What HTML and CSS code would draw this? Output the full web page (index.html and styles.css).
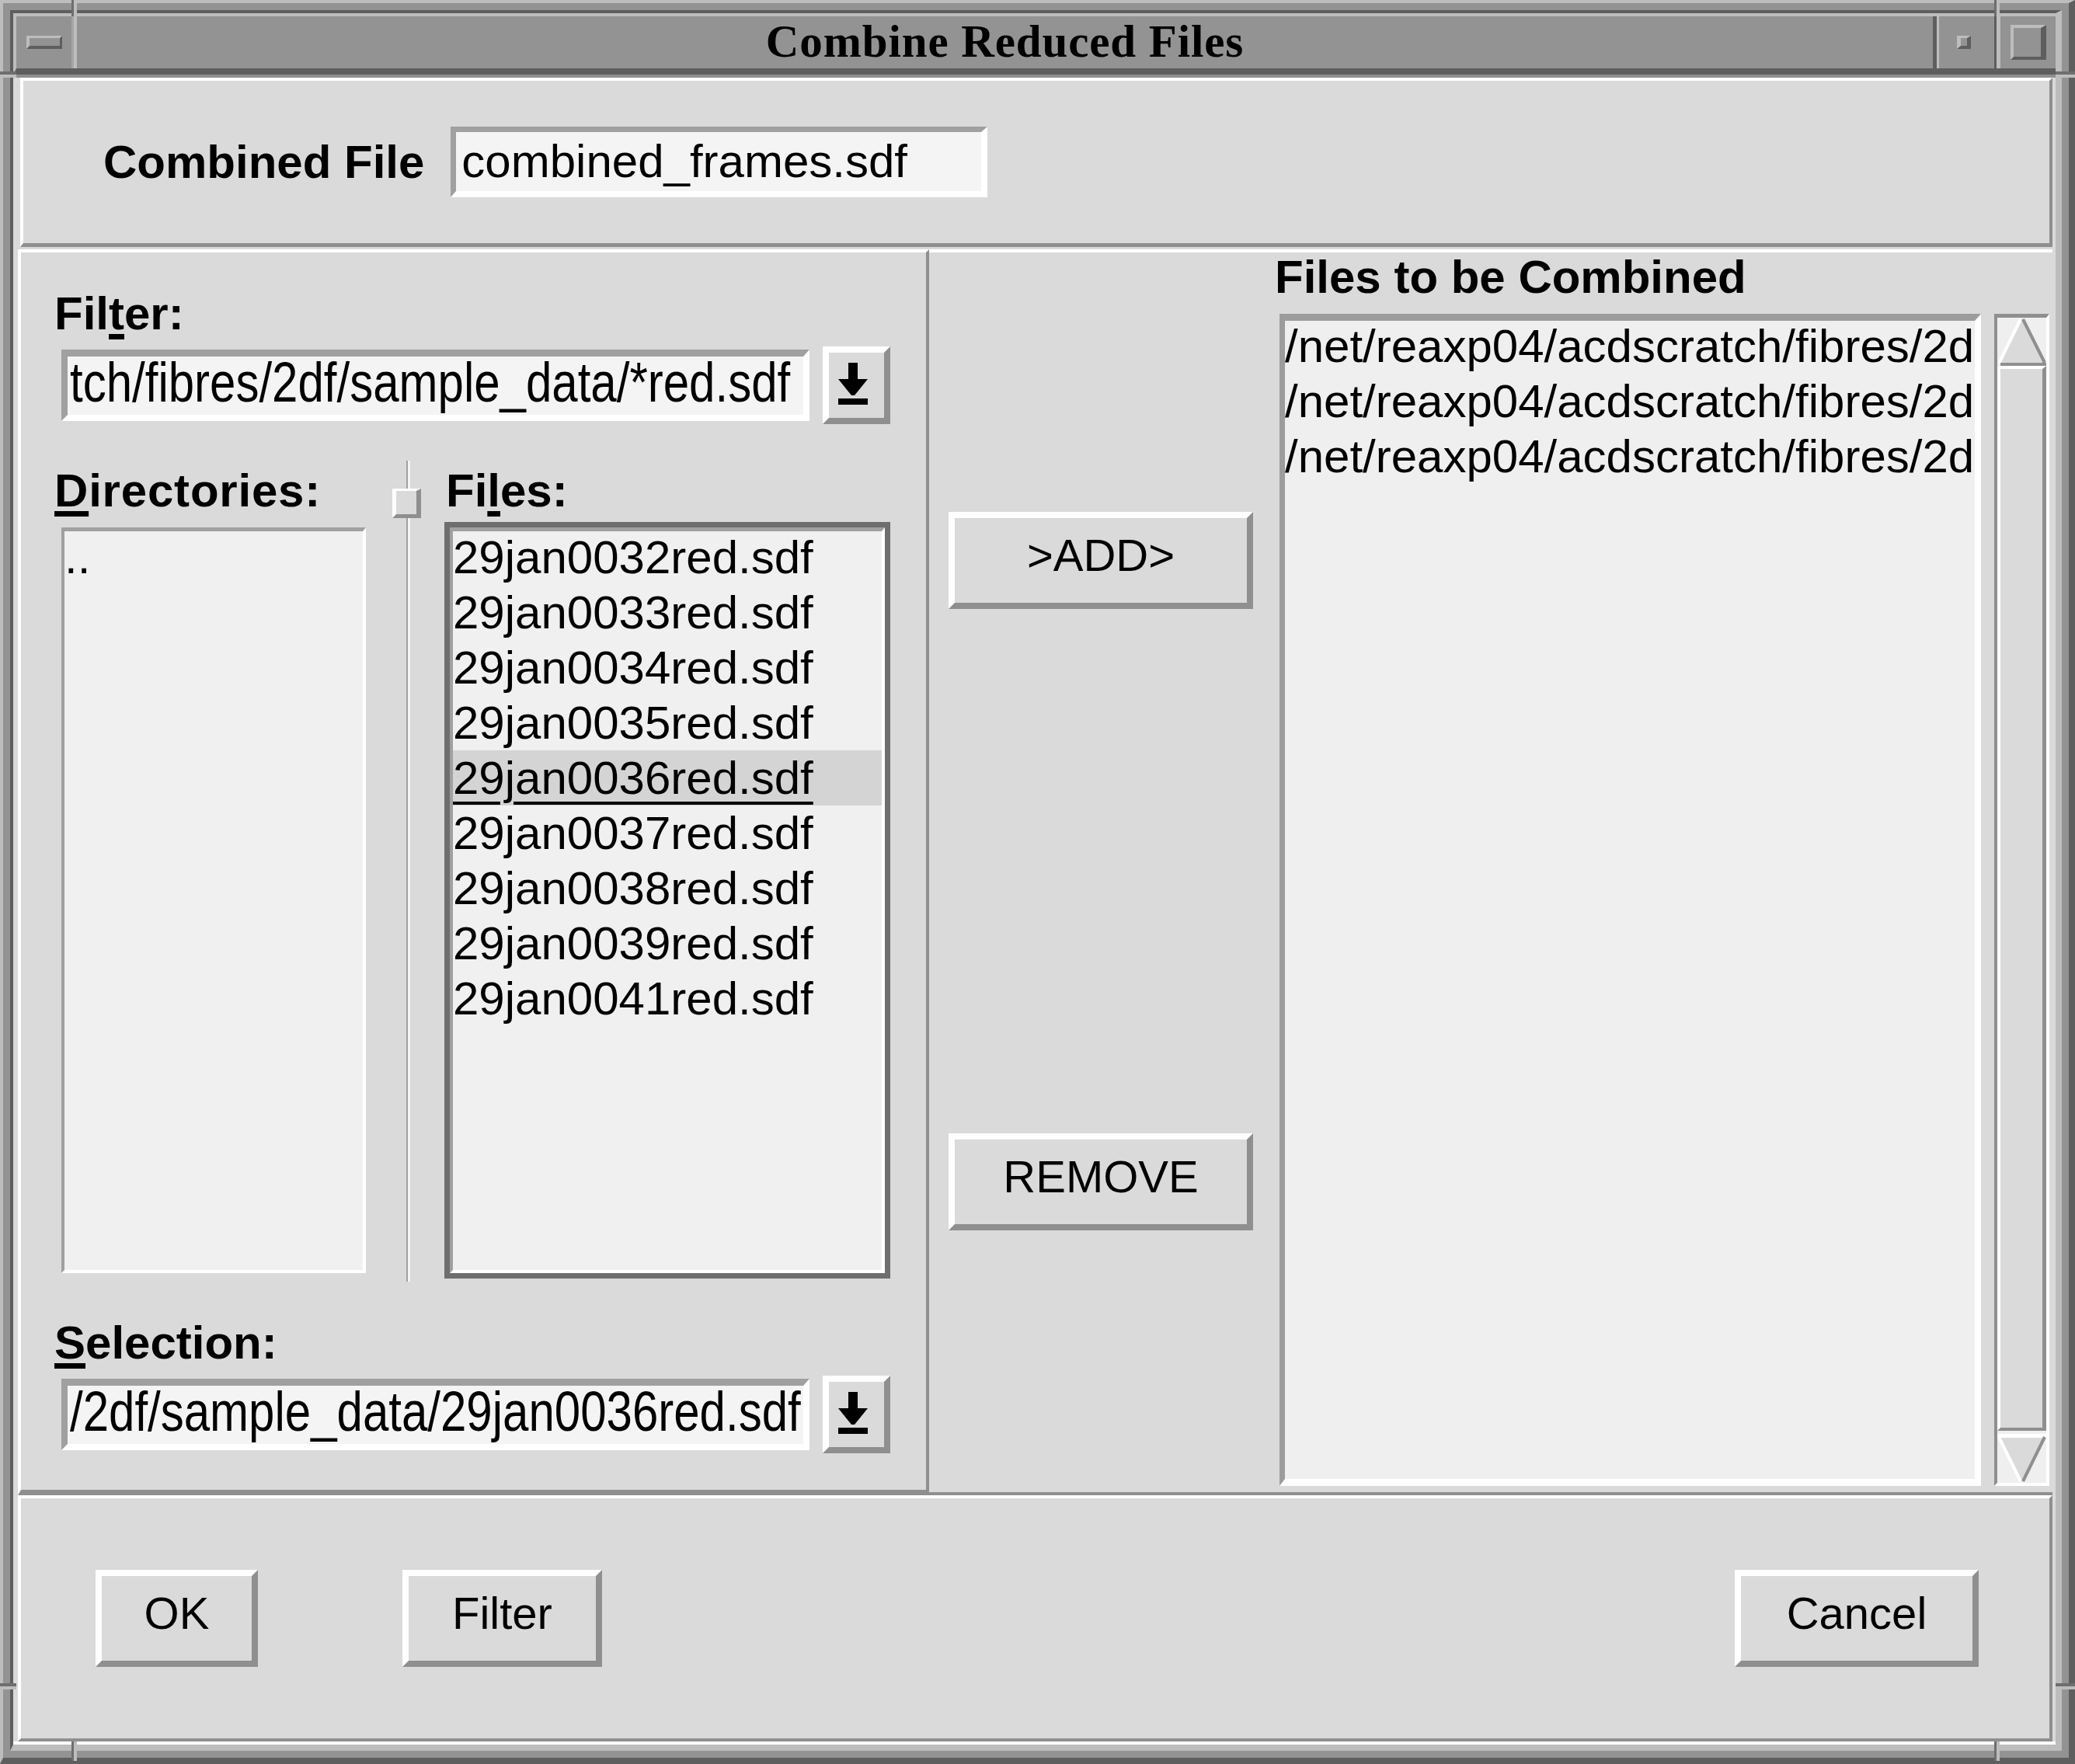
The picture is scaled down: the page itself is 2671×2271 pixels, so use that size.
FILE: index.html
```html
<!DOCTYPE html>
<html>
<head>
<meta charset="utf-8">
<title>Combine Reduced Files</title>
<link rel="stylesheet" href="styles.css">
</head>
<body>
<div class="window">
  <span class="mark mark-v mark-tl"></span>
  <span class="mark mark-v mark-tr"></span>
  <span class="mark mark-v mark-bl"></span>
  <span class="mark mark-v mark-br"></span>
  <span class="mark mark-h mark-lt"></span>
  <span class="mark mark-h mark-rt"></span>
  <span class="mark mark-h mark-lb"></span>
  <span class="mark mark-h mark-rb"></span>
  <div class="frame">
    <div class="titlebar">
      <div class="tb-menu"><span class="ico-menu"></span></div>
      <div class="tb-title">Combine Reduced Files</div>
      <div class="tb-min"><span class="ico-min"></span></div>
      <div class="tb-max"><span class="ico-max"></span></div>
    </div>
    <div class="content">
      <div class="sec-top">
        <span class="lbl lbl-combined">Combined File</span>
        <div class="field field-combined"><span class="field-text">combined_frames.sdf</span></div>
      </div>
      <div class="middle">
        <div class="panel-left">
          <div class="lbl lbl-filter">Fil<u>t</u>er:</div>
          <div class="field-row">
            <div class="field field-path"><span class="field-text tall">tch/fibres/2df/sample_data/*red.sdf</span></div>
            <div class="arrow-btn">
              <svg width="71" height="84" viewBox="0 0 71 84"><rect x="25" y="13" width="12" height="22" fill="#000"/><polygon points="12,34 50,34 33,55 29,55" fill="#000"/><rect x="12" y="59" width="38" height="8" fill="#000"/></svg>
            </div>
          </div>
          <div class="lists">
            <div class="list-col col-dirs">
              <div class="lbl lbl-dirs"><u>D</u>irectories:</div>
              <div class="list">
                <div class="list-inner">
                  <div class="rows"><div class="row">..</div></div>
                </div>
              </div>
            </div>
            <div class="sash"><span class="sash-line"></span><span class="sash-handle"></span></div>
            <div class="list-col col-files">
              <div class="lbl lbl-files">Fi<u>l</u>es:</div>
              <div class="list focus">
                <div class="list-inner">
                  <div class="rows">
                    <div class="row">29jan0032red.sdf</div>
                    <div class="row">29jan0033red.sdf</div>
                    <div class="row">29jan0034red.sdf</div>
                    <div class="row">29jan0035red.sdf</div>
                    <div class="row selected"><span class="cursor">29jan0036red.sdf</span></div>
                    <div class="row">29jan0037red.sdf</div>
                    <div class="row">29jan0038red.sdf</div>
                    <div class="row">29jan0039red.sdf</div>
                    <div class="row">29jan0041red.sdf</div>
                  </div>
                </div>
              </div>
            </div>
          </div>
          <div class="lbl lbl-sel"><u>S</u>election:</div>
          <div class="field-row">
            <div class="field field-path"><span class="field-text tall">/2df/sample_data/29jan0036red.sdf</span></div>
            <div class="arrow-btn">
              <svg width="71" height="84" viewBox="0 0 71 84"><rect x="25" y="13" width="12" height="22" fill="#000"/><polygon points="12,34 50,34 33,55 29,55" fill="#000"/><rect x="12" y="59" width="38" height="8" fill="#000"/></svg>
            </div>
          </div>
        </div>
        <div class="panel-right">
          <div class="btn-col">
            <div class="btn btn-add">&gt;ADD&gt;</div>
            <div class="btn btn-remove">REMOVE</div>
          </div>
          <div class="combo-col">
            <div class="lbl lbl-combo">Files to be Combined</div>
            <div class="combo-row">
              <div class="list-combo">
                <div class="rows">
                  <div class="row">/net/reaxp04/acdscratch/fibres/2d</div>
                  <div class="row">/net/reaxp04/acdscratch/fibres/2d</div>
                  <div class="row">/net/reaxp04/acdscratch/fibres/2d</div>
                </div>
              </div>
              <div class="scrollbar">
                <svg class="sb-arrow" width="63" height="62" viewBox="0 0 63 62"><polygon points="31.5,1 1,58 62,58" fill="#dadada"/><line x1="2" y1="59" x2="30" y2="2" stroke="#fff" stroke-width="4"/><line x1="33" y1="2" x2="61" y2="58" stroke="#8f8f8f" stroke-width="4"/><rect x="4" y="58" width="59" height="4" fill="#8f8f8f"/></svg>
                <div class="sb-slider"></div>
                <svg class="sb-arrow" width="63" height="63" viewBox="0 0 63 63"><polygon points="1,4 62,4 31.5,62" fill="#dadada"/><rect x="0" y="0" width="63" height="5" fill="#fff"/><line x1="2" y1="4" x2="30" y2="61" stroke="#fff" stroke-width="4"/><line x1="61" y1="4" x2="33" y2="61" stroke="#8f8f8f" stroke-width="4"/></svg>
              </div>
            </div>
          </div>
        </div>
      </div>
      <div class="sec-bottom">
        <div class="btn btn-ok">OK</div>
        <div class="btn btn-filter">Filter</div>
        <div class="btn btn-cancel">Cancel</div>
      </div>
    </div>
  </div>
</div>
</body>
</html>
```

FILE: styles.css
```css
html, body {
  margin: 0;
  padding: 0;
  background: #dadada;
}

.window {
  position: relative;
  width: 2671px;
  height: 2271px;
  box-sizing: border-box;
  border-style: solid;
  border-width: 4px 8px 8px 4px;
  border-color: #bdbdbd #5e5e5e #5e5e5e #bdbdbd;
  background: #939393;
  padding: 9px;
}

/* resize-corner marks in the window frame */
.mark {
  position: absolute;
  box-sizing: border-box;
  background: #bdbdbd;
}

.mark-v {
  width: 7px;
  height: 21px;
  border-left: 3px solid #6e6e6e;
}

.mark-h {
  width: 21px;
  height: 8px;
  border-top: 4px solid #6e6e6e;
}

.mark-tl { left: 88px; top: -4px; }
.mark-tr { left: 2563px; top: -4px; }
.mark-bl { left: 88px; top: 2238px; height: 25px; }
.mark-br { left: 2563px; top: 2238px; height: 25px; }
.mark-lt { left: -4px; top: 88px; }
.mark-rt { left: 2642px; top: 88px; width: 25px; }
.mark-lb { left: -4px; top: 2163px; }
.mark-rb { left: 2642px; top: 2163px; width: 25px; }

.frame {
  height: 100%;
  box-sizing: border-box;
  border-style: solid;
  border-width: 4px 8px 8px 4px;
  border-color: #5e5e5e #bdbdbd #bdbdbd #5e5e5e;
  display: flex;
  flex-direction: column;
}

/* ---------- title bar ---------- */
.titlebar {
  display: flex;
  height: 79px;
  box-sizing: border-box;
  border-top: 4px solid #bdbdbd;
  border-left: 4px solid #bdbdbd;
  border-bottom: 8px solid #5e5e5e;
  background: #939393;
}

.tb-menu {
  width: 71px;
  border-right: 3px solid #a6a6a6;
  display: flex;
  align-items: center;
  justify-content: center;
}

.ico-menu {
  width: 46px;
  height: 17px;
  box-sizing: border-box;
  border-style: solid;
  border-width: 3px 3px 4px 4px;
  border-color: #bdbdbd #5e5e5e #5e5e5e #bdbdbd;
}

.tb-title {
  flex: 1;
  border-left: 4px solid #bdbdbd;
  text-align: center;
  font-family: "Liberation Serif", "Times New Roman", serif;
  font-weight: bold;
  font-size: 59px;
  letter-spacing: 0.9px;
  line-height: 65px;
  color: #000;
  white-space: nowrap;
}

.tb-min, .tb-max {
  width: 79px;
  box-sizing: border-box;
  display: flex;
  align-items: center;
  justify-content: center;
}

.tb-min {
  border-left: 5px solid #5e5e5e;
  box-shadow: inset 3px 0 0 #bdbdbd;
  padding-right: 4px;
}

.tb-max {
  border-left: 3px solid #5e5e5e;
  box-shadow: inset 5px 0 0 #bdbdbd;
  padding-left: 5px;
}

.ico-min {
  width: 18px;
  height: 17px;
  box-sizing: border-box;
  border-style: solid;
  border-width: 3px 5px 4px 5px;
  border-color: #bdbdbd #5e5e5e #5e5e5e #bdbdbd;
}

.ico-max {
  width: 46px;
  height: 45px;
  box-sizing: border-box;
  border-style: solid;
  border-width: 4px 7px 4px 4px;
  border-color: #bdbdbd #5e5e5e #5e5e5e #bdbdbd;
}

/* ---------- dialog content ---------- */
.content {
  flex: 1;
  background: #dadada;
  border-top: 4px solid #8f8f8f;
  border-bottom: 4px solid #ffffff;
  padding: 0 4px 0 6px;
  display: flex;
  flex-direction: column;
  font-family: "Liberation Sans", Arial, sans-serif;
  color: #000;
}

.lbl {
  font-family: "Liberation Sans", Arial, sans-serif;
  font-weight: bold;
  font-size: 60px;
  line-height: 70px;
  white-space: nowrap;
}

.lbl u {
  text-decoration-thickness: 7px;
  text-underline-offset: 6px;
}

.sec-top {
  height: 218px;
  box-sizing: border-box;
  margin-left: 3px;
  border-style: solid;
  border-width: 4px 4px 5px 4px;
  border-color: #ffffff #8f8f8f #8f8f8f #ffffff;
  display: flex;
  align-items: center;
  padding-left: 103px;
}

.field {
  box-sizing: border-box;
  border-style: solid;
  border-color: #a0a0a0 #ffffff #ffffff #a0a0a0;
  background: #f4f4f4;
  overflow: hidden;
  white-space: nowrap;
}

.field-combined {
  margin-left: 34px;
  width: 691px;
  height: 91px;
  border-width: 7px 8px 8px 7px;
  padding-left: 7px;
  font-size: 60px;
  line-height: 76px;
}

.field-path {
  width: 963px;
  height: 92px;
  border-width: 9px 8px 8px 8px;
  padding-left: 3px;
}

.field-text.tall {
  font-family: "Liberation Sans", Arial, sans-serif;
  font-size: 60px;
  line-height: 55px;
  display: inline-block;
  transform-origin: 0 0;
  transform: scaleY(1.2);
}

/* ---------- middle ---------- */
.middle {
  display: flex;
  height: 1604px;
  margin-top: 3px;
}

.panel-left {
  width: 1173px;
  box-sizing: border-box;
  border-style: solid;
  border-width: 4px 4px 7px 4px;
  border-color: #ffffff #8f8f8f #8f8f8f #ffffff;
  padding-left: 52px;
  display: flex;
  flex-direction: column;
}

.lbl-filter {
  margin-top: 44px;
  margin-left: -9px;
}

.field-row {
  display: flex;
  align-items: center;
  margin-top: 7px;
  height: 100px;
}

.arrow-btn {
  margin-left: 17px;
  width: 87px;
  height: 100px;
  box-sizing: border-box;
  border: 8px solid;
  border-color: #ffffff #8f8f8f #8f8f8f #ffffff;
  background: #dadada;
}

.arrow-btn svg {
  display: block;
}

.lists {
  display: flex;
  margin-top: 51px;
  margin-left: -7px;
}

.list-col {
  display: flex;
  flex-direction: column;
}

.col-dirs {
  width: 406px;
}

.col-files {
  width: 574px;
}

.lbl-dirs {
  margin-left: -2px;
  letter-spacing: 0.8px;
}

.lbl-files {
  margin-left: 2px;
}

.list {
  margin-top: 5px;
  height: 974px;
  box-sizing: border-box;
  border: 7px solid transparent;
}

.list.focus {
  border-color: #6e6e6e;
}

.list-inner {
  height: 100%;
  box-sizing: border-box;
  border-style: solid;
  border-width: 5px 4px 4px 4px;
  border-color: #a0a0a0 #ffffff #ffffff #a0a0a0;
  background: #f0f0f0;
  overflow: hidden;
}

.rows {
  margin-top: -2px;
}

.row {
  font-family: "Liberation Sans", Arial, sans-serif;
  font-size: 60px;
  line-height: 71px;
  height: 71px;
  white-space: nowrap;
}

.row.selected {
  background: #d4d4d4;
}

.cursor {
  text-decoration: underline;
  text-decoration-thickness: 4px;
  text-underline-offset: 10px;
}

.sash {
  width: 94px;
  position: relative;
  display: flex;
  justify-content: center;
  margin: -4px 0 -4px 0;
}

.sash-line {
  width: 5px;
  box-sizing: border-box;
  border-left: 2px solid #a0a0a0;
  border-right: 3px solid #f4f4f4;
}

.sash-handle {
  position: absolute;
  left: 27px;
  top: 36px;
  width: 37px;
  height: 38px;
  box-sizing: border-box;
  border-style: solid;
  border-width: 3px 6px 5px 5px;
  border-color: #ffffff #8f8f8f #8f8f8f #ffffff;
  background: #dadada;
}

.lbl-sel {
  margin-top: 48px;
  margin-left: -9px;
}

/* ---------- right panel ---------- */
.panel-right {
  flex: 1;
  box-sizing: border-box;
  border-top: 4px solid #ffffff;
  border-bottom: 4px solid #8f8f8f;
  display: flex;
}

.btn {
  box-sizing: border-box;
  border: 8px solid;
  border-color: #ffffff #8f8f8f #8f8f8f #ffffff;
  background: #dadada;
  display: flex;
  align-items: center;
  justify-content: center;
  font-family: "Liberation Sans", Arial, sans-serif;
  font-size: 58px;
  line-height: 70px;
  height: 125px;
  padding-bottom: 13px;
  white-space: nowrap;
}

.btn-col {
  width: 392px;
  margin-left: 25px;
  display: flex;
  flex-direction: column;
}

.btn-add {
  margin-top: 334px;
}

.btn-remove {
  margin-top: 675px;
}

.combo-col {
  margin-left: 34px;
  display: flex;
  flex-direction: column;
}

.lbl-combo {
  margin-top: 2px;
  margin-left: -6px;
  line-height: 60px;
}

.combo-row {
  margin-top: 17px;
  height: 1509px;
  display: flex;
}

.list-combo {
  width: 903px;
  box-sizing: border-box;
  border-style: solid;
  border-width: 9px 8px 9px 7px;
  border-color: #9c9c9c #ffffff #ffffff #9c9c9c;
  background: #efefef;
  overflow: hidden;
}

.list-combo .rows {
  margin-top: -3px;
}

.scrollbar {
  margin-left: 17px;
  width: 71px;
  box-sizing: border-box;
  border-style: solid;
  border-width: 5px 4px 4px 4px;
  border-color: #8f8f8f #ffffff #ffffff #8f8f8f;
  background: #efefef;
  display: flex;
  flex-direction: column;
}

.sb-arrow {
  display: block;
  flex: none;
}

.sb-slider {
  flex: 1;
  box-sizing: border-box;
  border-style: solid;
  border-width: 4px 5px 4px 4px;
  border-color: #ffffff #8f8f8f #8f8f8f #ffffff;
  background: #dadada;
  margin-bottom: 4px;
}

/* ---------- bottom ---------- */
.sec-bottom {
  flex: 1;
  box-sizing: border-box;
  border-style: solid;
  border-width: 4px;
  border-color: #ffffff #8f8f8f #8f8f8f #ffffff;
  display: flex;
  align-items: center;
}

.btn-ok {
  margin-left: 96px;
  width: 209px;
}

.btn-filter {
  margin-left: 186px;
  width: 257px;
}

.btn-cancel {
  margin-left: auto;
  margin-right: 91px;
  width: 314px;
}
```
